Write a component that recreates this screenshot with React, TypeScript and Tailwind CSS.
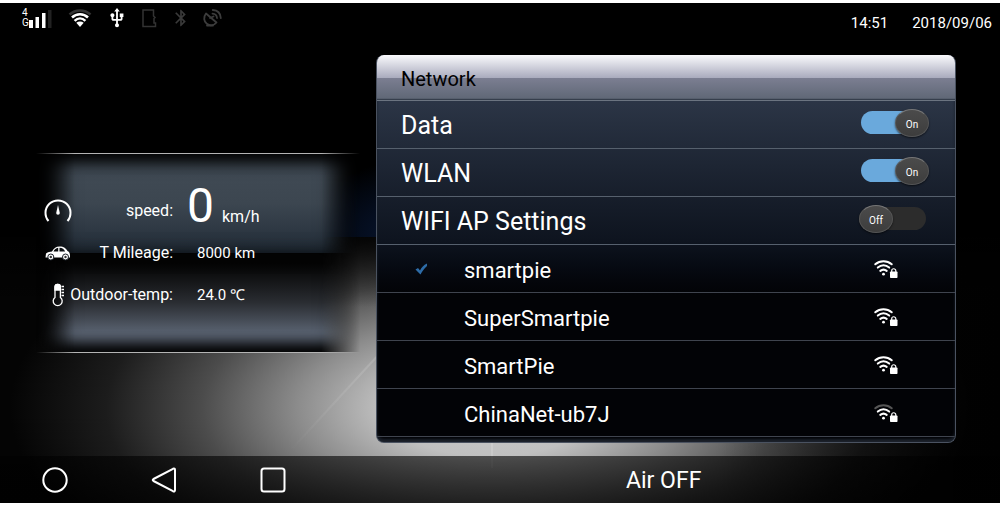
import { useState } from "react";
import type { ReactNode } from "react";
import { MdBluetooth, MdUsb } from "react-icons/md";

const networks = [
  { name: "smartpie", connected: true, strength: 3 },
  { name: "SuperSmartpie", connected: false, strength: 3 },
  { name: "SmartPie", connected: false, strength: 3 },
  { name: "ChinaNet-ub7J", connected: false, strength: 2 },
];

function Wallpaper() {
  return (
    <svg
      className="absolute inset-0 h-full w-full"
      viewBox="0 0 1000 500"
      preserveAspectRatio="none"
      aria-hidden="true"
    >
      <defs>
        <radialGradient id="floor" gradientUnits="userSpaceOnUse" cx="0" cy="0" r="1" gradientTransform="translate(490 405) scale(480 220)">
          <stop offset="0" stopColor="#cccccc" />
          <stop offset="0.22" stopColor="#c0c0c0" />
          <stop offset="0.4" stopColor="#8c8c8c" />
          <stop offset="0.6" stopColor="#4c4c4c" />
          <stop offset="0.8" stopColor="#1c1c1c" />
          <stop offset="1" stopColor="#040404" />
        </radialGradient>
        <radialGradient id="sky" gradientUnits="userSpaceOnUse" cx="0" cy="0" r="1" gradientTransform="translate(440 234) scale(150 80)">
          <stop offset="0" stopColor="#0a1c40" />
          <stop offset="1" stopColor="#000000" />
        </radialGradient>
        <linearGradient id="shade" x1="0" y1="0" x2="0" y2="1">
          <stop offset="0" stopColor="#000" stopOpacity="0.8" />
          <stop offset="1" stopColor="#000" stopOpacity="0" />
        </linearGradient>
        <linearGradient id="beam" x1="0" y1="1" x2="1" y2="0">
          <stop offset="0" stopColor="#fff" stopOpacity="0" />
          <stop offset="1" stopColor="#fff" stopOpacity="0.15" />
        </linearGradient>
        <linearGradient id="dim" x1="0" y1="0" x2="1" y2="0">
          <stop offset="0" stopColor="#000" stopOpacity="0" />
          <stop offset="1" stopColor="#000" stopOpacity="0.75" />
        </linearGradient>
      </defs>
      <rect width="1000" height="500" fill="#000" />
      <rect width="1000" height="234" fill="url(#sky)" />
      <rect y="234" width="1000" height="266" fill="url(#floor)" />
      <rect y="234" width="1000" height="70" fill="url(#shade)" />
      <rect x="720" y="234" width="280" height="266" fill="url(#dim)" />
      <path d="M290 448 L382 348" stroke="url(#beam)" strokeWidth="2" />
      <path d="M492 440 V465" stroke="#fff" strokeOpacity="0.15" strokeWidth="2" />
    </svg>
  );
}

function SignalIcon() {
  return (
    <div className="flex items-end">
      <span className="flex flex-col text-[10px] leading-[10px] text-white">
        <span>4</span>
        <span>G</span>
      </span>
      <svg width="23" height="18" viewBox="0 0 23 18" fill="#fff" aria-hidden="true">
        <rect x="0" y="10" width="4" height="8" />
        <rect x="6.500" y="7" width="3.500" height="11" />
        <rect x="13" y="3" width="3.500" height="15" />
        <rect x="19" y="0" width="3.500" height="18" fill="#222" />
      </svg>
    </div>
  );
}

function StatusWifi() {
  return (
    <svg width="24" height="18" viewBox="0 0 24 18" fill="none" strokeWidth="2.500" aria-hidden="true">
      <path d="M1.500 5.500 C7.500 0 16.500 0 22.500 5.500" stroke="#333" />
      <path d="M4 8.500 C8.500 4 15.500 4 20 8.500" stroke="#fff" />
      <path d="M6.600 11.800 C9.800 8.800 14.200 8.800 17.400 11.800" stroke="#fff" />
      <path d="M8.300 13.800 C10.500 12 13.500 12 15.700 13.800 L12 18 Z" fill="#fff" />
    </svg>
  );
}

function SdCard() {
  return (
    <svg width="15" height="19" viewBox="0 0 15 19" fill="none" stroke="#333" strokeWidth="1.500" aria-hidden="true">
      <path d="M1 1 H11.500 V7 L13 8.500 L12 9.500 V14 H13.500 V17.500 H1 Z" />
    </svg>
  );
}

function Satellite() {
  return (
    <svg width="19" height="18" viewBox="0 0 19 18" fill="none" stroke="#3c3c3c" strokeWidth="1.800" strokeLinecap="round" strokeLinejoin="round" aria-hidden="true">
      <path d="M3 4.500 C.2 8 .8 12.500 3.800 14.800 C7 17.200 11 16.500 13.500 13.500 Z" />
      <path d="M7 9 L10.500 7.500" />
      <path d="M9.500 4.600 C12.500 4.800 13.800 6.500 14 9" />
      <path d="M9.800 1 C14.800 1.300 17.500 4.500 17.800 9" />
      <path d="M4 16.500 H10" />
    </svg>
  );
}

function Speedometer() {
  return (
    <svg width="28" height="26" viewBox="0 0 28 26" fill="none" stroke="#fff" strokeWidth="2" aria-hidden="true">
      <path d="M4.500 23 A12.500 12.500 0 1 1 23.500 23" />
      <path d="M14 7 L15.800 15 A1.800 1.800 0 1 1 12.200 15 Z" fill="#fff" stroke="none" />
    </svg>
  );
}

function Car() {
  return (
    <svg width="26" height="15" viewBox="0 0 26 15" fill="#fff" aria-hidden="true">
      <path
        fillRule="evenodd"
        d="M1 7.500 C3 6 5 5.800 7 5.500 C9 2 11 .5 14.500 .5 C19 .5 21 2.500 22.500 5 C24.500 6 25 7.500 25 10 L25 11.500 H.5 Z M8.500 5.600 H13.200 V1.800 C11 2 9.500 3.500 8.500 5.600 Z M14.500 5.600 H20.200 C19 3.200 17.500 2 14.500 1.800 Z"
      />
      <circle cx="5.800" cy="11" r="3" stroke="#1c222a" strokeWidth="1" />
      <circle cx="20.500" cy="11" r="3" stroke="#1c222a" strokeWidth="1" />
      <circle cx="5.800" cy="11" r="1.200" fill="#333" />
      <circle cx="20.500" cy="11" r="1.200" fill="#333" />
    </svg>
  );
}

function Thermometer() {
  return (
    <svg width="12" height="24" viewBox="0 0 12 24" fill="none" stroke="#fff" strokeWidth="1.300" aria-hidden="true">
      <path d="M3 14.500 V4 A2.700 2.700 0 0 1 8.400 4 V14.500 A4.500 4.500 0 1 1 3 14.500 Z" />
      <path d="M3 7 V4 A2.700 2.700 0 0 1 8.400 4 V7 Z" fill="#fff" />
      <path d="M9.500 3.500 H12 M9.500 6.500 H12 M9.500 9.500 H12 M9.500 12.500 H12" />
    </svg>
  );
}

function SecureWifi({ strength }: { strength: number }) {
  return (
    <svg width="24" height="18" viewBox="0 0 24 18" fill="none" stroke="#fff" strokeWidth="2" strokeLinecap="round" aria-hidden="true">
      <path d="M1.300 4.300 C6 .2 13 .2 17.700 4.300" stroke={strength > 2 ? "#fff" : "#555"} />
      <path d="M3.800 7.600 C7.200 4.600 11.800 4.600 15.200 7.600" />
      <path d="M6.300 10.900 C8.300 9.300 10.700 9.300 12.700 10.900" />
      <circle cx="9.500" cy="14.200" r="1.400" fill="#fff" stroke="none" />
      <rect x="16" y="11.500" width="7.500" height="6.500" rx="0.800" fill="#fff" stroke="none" />
      <path d="M17.700 12 V10.800 A2 2 0 0 1 21.800 10.800 V12" strokeWidth="1.200" />
    </svg>
  );
}

function SwitchRow({ label, initial }: { label: string; initial: boolean }) {
  const [on, setOn] = useState(initial);

  return (
    <label className="flex h-12 cursor-pointer items-center justify-between border-b border-[#56606d] pr-[26px] pl-6 text-[25px] text-white">
      <span className="pt-0.5">{label}</span>
      <input
        type="checkbox"
        className="sr-only"
        checked={on}
        onChange={(e) => setOn(e.target.checked)}
      />
      <span className="mb-1 grid w-[70px] items-center">
        <span
          className={`col-start-1 row-start-1 h-[23px] rounded-full ${on ? "mr-1 ml-0.5 bg-[#6aa9dc]" : "mr-[3px] bg-[#2c2c2c]"}`}
        ></span>
        <span
          className={`col-start-1 row-start-1 flex h-7 w-[34px] items-center justify-center rounded-[50%] border border-[#555] border-t-[#777] bg-linear-to-b from-[#4b4b4b] to-[#3d3d3d] pt-1 text-[10px] leading-none shadow-[0_1px_2px_rgba(0,0,0,0.6)] ${on ? "justify-self-end" : "justify-self-start"}`}
        >
          {on ? "On" : "Off"}
        </span>
      </span>
    </label>
  );
}

function InfoRow({ icon, label, children }: { icon: ReactNode; label: string; children: ReactNode }) {
  return (
    <div className="flex h-[42px] items-center">
      <span className="flex w-7 shrink-0 justify-center">{icon}</span>
      <span className="flex w-[101px] shrink-0 justify-end whitespace-nowrap">{label}</span>
      {children}
    </div>
  );
}

export default function App() {
  return (
    <div className="flex min-h-screen flex-col border-t-[3px] border-b-2 border-white bg-black font-[Roboto,sans-serif] text-white">
      <div className="relative flex flex-1 flex-col">
        <Wallpaper />

        {/* Status bar */}
        <header className="relative flex h-[52px] items-start justify-between pr-2 pl-[22px]">
          <div className="flex h-[30px] items-center">
            <SignalIcon />
            <div className="flex items-center pl-4">
              <StatusWifi />
              <MdUsb className="ml-3.5 text-white" size={22} />
              <span className="ml-3.5">
                <SdCard />
              </span>
              <MdBluetooth className="ml-3.5 text-[#3a3a3a]" size={20} />
              <span className="ml-3">
                <Satellite />
              </span>
            </div>
          </div>
          <div className="flex gap-6 pt-2 text-[15px] leading-6">
            <time>14:51</time>
            <time>2018/09/06</time>
          </div>
        </header>

        <main className="relative flex flex-1 items-start">
          {/* Vehicle info */}
          <section className="w-[37.6%] pt-[98px] pr-4 pl-9">
            <div className="relative h-[200px] pt-[37px] pl-2 text-[16px]">
              <div className="absolute inset-0 mask-x-from-88% mask-x-to-100%">
                <div className="h-px bg-[#b4b4b4]"></div>
                <div className="h-[99px] bg-linear-to-b from-[#424c56] via-[#3c4650] to-[#222d38] shadow-[inset_0_12px_16px_-4px_#000,inset_28px_0_26px_-10px_#000,inset_-28px_0_26px_-10px_#000]"></div>
                <div className="h-[99px] bg-linear-to-b from-[#050505] from-10% via-[#2a2d32] via-50% to-[#596270] to-80% shadow-[inset_0_-12px_14px_-4px_#000,inset_28px_0_26px_-10px_#000,inset_-28px_0_26px_-10px_#000]"></div>
                <div className="h-px bg-[#b4b4b4]"></div>
              </div>
              <div className="relative">
                <InfoRow icon={<Speedometer />} label="speed:">
                  <span className="flex items-baseline gap-2 pb-2 pl-3.5">
                    <span className="text-[48px] leading-[42px]">0</span>
                    <span>km/h</span>
                  </span>
                </InfoRow>
                <InfoRow icon={<Car />} label="T Mileage:">
                  <span className="pl-6 text-[15px]">8000 km</span>
                </InfoRow>
                <InfoRow icon={<Thermometer />} label="Outdoor-temp:">
                  <span className="pl-6 text-[15px]">24.0 ℃</span>
                </InfoRow>
              </div>
            </div>
          </section>

          {/* Network settings */}
          <section className="mr-11 mb-[13px] flex-1 overflow-hidden rounded-lg border border-t-0 border-[#4a5260] bg-linear-to-b from-[#2d3748] from-10% via-[#0e141f] via-48% to-[#020306] to-62% pb-[5px] shadow-[inset_0_-3px_3px_#1c222c]">
            <h1 className="flex h-[46px] items-center border-b border-[#6b7480] bg-[linear-gradient(#fafafd_0%,#a9abbd_51%,#7b7e91_52%,#606877_96%,#252e3b_100%)] pt-0.5 pl-6 text-[20px] text-black">
              Network
            </h1>
            <SwitchRow label="Data" initial={true} />
            <SwitchRow label="WLAN" initial={true} />
            <SwitchRow label="WIFI AP Settings" initial={false} />
            <ul>
              {networks.map((network) => (
                <li key={network.name} className="border-b border-[#3f444e]">
                  <button
                    type="button"
                    className="flex h-[47px] w-full items-center pr-[57px] pl-6 text-[22px] text-white"
                  >
                    <span className="w-[63px] pl-3.5">
                      {network.connected && (
                        <svg width="13" height="12" viewBox="0 0 13 12" fill="#2d6ca8" aria-hidden="true">
                          <path d="M.5 6.500 L3 5 L5 7.500 C6.500 4.500 8.500 2 12 .5 L12 3 C9 5.500 7.500 8 5.500 11.500 Z" />
                        </svg>
                      )}
                    </span>
                    <span className="flex-1 pt-1 text-left">{network.name}</span>
                    <SecureWifi strength={network.strength} />
                  </button>
                </li>
              ))}
            </ul>
          </section>
        </main>

        {/* Navigation bar */}
        <footer className="relative flex h-[47px] items-center bg-linear-to-b from-black/60 to-black/75">
          <nav className="flex w-[62.6%] items-center gap-[83px] pl-[42px]">
            <button type="button" aria-label="Home">
              <svg width="26" height="26" viewBox="0 0 26 26" fill="none" stroke="#fff" strokeWidth="2">
                <circle cx="13" cy="13" r="11.700" />
              </svg>
            </button>
            <button type="button" aria-label="Back">
              <svg width="26" height="26" viewBox="0 0 26 26" fill="none" stroke="#fff" strokeWidth="2" strokeLinejoin="round">
                <path d="M2.500 12 L22 1.800 Q24 1 24 3 V23 Q24 25 22 24.200 L2.500 14 Q1 13 2.500 12 Z" />
              </svg>
            </button>
            <button type="button" aria-label="Recent apps">
              <svg width="26" height="26" viewBox="0 0 26 26" fill="none" stroke="#fff" strokeWidth="2">
                <rect x="1.500" y="1.500" width="23" height="23" rx="2.500" />
              </svg>
            </button>
          </nav>
          <button type="button" className="pt-1 text-[23px] text-white">
            Air OFF
          </button>
        </footer>
      </div>
    </div>
  );
}
